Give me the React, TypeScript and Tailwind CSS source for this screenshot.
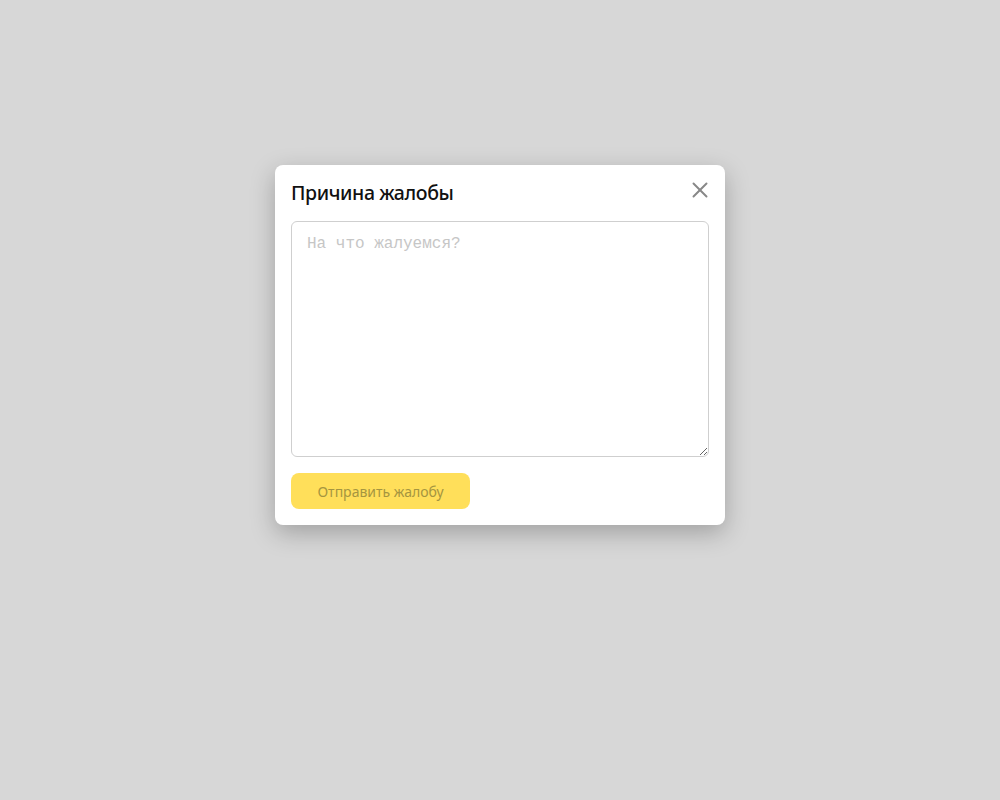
import { X } from "lucide-react";

export default function App() {
  return (
    <div className="flex h-[800px] w-full justify-center bg-[#d7d7d7] pt-[165px] font-['Noto_Sans',sans-serif]">
      <div className="flex h-[360px] w-[450px] flex-col rounded-lg bg-white px-4 pb-4 pt-[14px] shadow-[0_8px_24px_rgba(0,0,0,0.25)]">
        <div className="flex items-start justify-between">
          <h2 className="text-[19.5px] font-medium leading-[28px] tracking-[-0.4px] text-[#111]">Причина жалобы</h2>
          <button type="button" className="-mr-[4px] -mt-[2px] text-[#888]" aria-label="Закрыть">
            <X className="h-[26px] w-[26px]" strokeWidth={1.8} />
          </button>
        </div>
        <textarea
          className="mt-[14px] h-[236px] w-full rounded-[6px] border border-[#cfcfcf] px-[15px] py-[12px] font-['Liberation_Mono',monospace] text-[16px] leading-[20px] outline-none placeholder:text-[#c6c6c6]"
          placeholder="На что жалуемся?"
        />
        <div className="mt-4">
          <button
            type="button"
            className="h-[36px] w-[179px] rounded-lg bg-[#ffdf5a] text-[14px] text-[#a59540]"
          >
            Отправить жалобу
          </button>
        </div>
      </div>
    </div>
  );
}
